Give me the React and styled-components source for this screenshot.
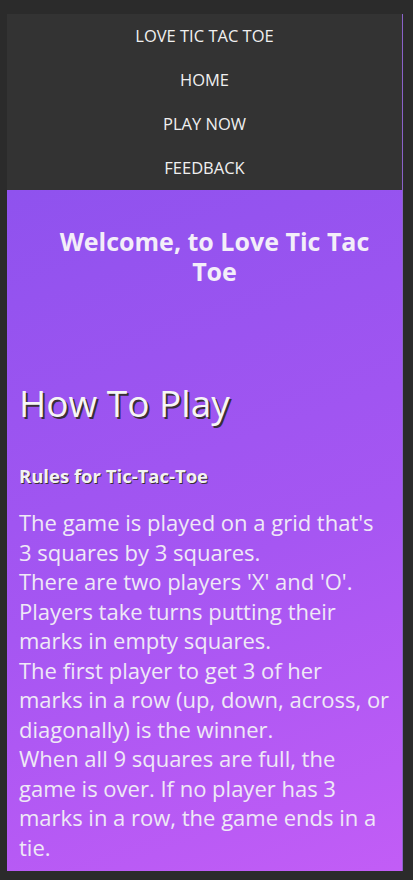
import styled, { createGlobalStyle } from "styled-components";

const GlobalStyle = createGlobalStyle`
  html, body {
    margin: 0;
    padding: 0;
    background: #2b2b2b;
  }
  body {
    font-family: "Open Sans", "Lato", sans-serif;
    color: #f2f2f2;
  }
`;

const Page = styled.div`
  padding: 14px 10px 9px 7px;
`;

const Frame = styled.div`
  display: flex;
  flex-direction: column;
  border-right: 1px solid #8a62c9;
`;

const Nav = styled.nav`
  display: flex;
  flex-direction: column;
  background: #333333;
`;

const NavLink = styled.a`
  display: block;
  height: 44px;
  line-height: 44px;
  text-align: center;
  font-size: 16.5px;
  font-weight: 400;
  color: #f0f0f0;
  text-decoration: none;
  text-transform: uppercase;
`;

const Main = styled.main`
  background: linear-gradient(160deg, #8f52ee 0%, #a656f2 55%, #c25df6 100%);
  padding: 36px 12px 9px 12px;
`;

const Welcome = styled.h2`
  margin: 0 0 95px 0;
  padding-left: 20px;
  text-align: center;
  font-size: 25px;
  line-height: 30px;
  font-weight: 700;
  color: #f3eef9;
`;

const Title = styled.h1`
  margin: 0 0 41px 0;
  font-size: 37px;
  line-height: 44px;
  font-weight: 500;
  color: #f6f6f6;
  text-shadow: 2px 2px 0 #3a2f38;
`;

const Subtitle = styled.h3`
  margin: 0 0 22px 0;
  font-size: 18.5px;
  line-height: 20px;
  font-weight: 700;
  color: #f3f3f3;
  text-shadow: 1px 1px 0 #3a2f38;
`;

const Rules = styled.p`
  margin: 0;
  width: 371px;
  font-size: 22px;
  line-height: 29.5px;
  font-weight: 400;
  color: #efe9f6;
`;

const links = ["Love Tic Tac Toe", "Home", "Play Now", "Feedback"];

const App = () => {
  return (
    <Page>
      <GlobalStyle />
      <Frame>
        <Nav>
          {links.map((l) => (
            <NavLink key={l} href="#">
              {l}
            </NavLink>
          ))}
        </Nav>
        <Main>
          <Welcome>Welcome, to Love Tic Tac Toe</Welcome>
          <Title>How To Play</Title>
          <Subtitle>Rules for Tic-Tac-Toe</Subtitle>
          <Rules>
            The game is played on a grid that's 3 squares by 3 squares.
            <br />
            There are two players 'X' and 'O'. Players take turns putting their
            marks in empty squares.
            <br />
            The first player to get 3 of her marks in a row (up, down, across,
            or diagonally) is the winner.
            <br />
            When all 9 squares are full, the game is over. If no player has 3
            marks in a row, the game ends in a tie.
          </Rules>
        </Main>
      </Frame>
    </Page>
  );
};

export default App;
